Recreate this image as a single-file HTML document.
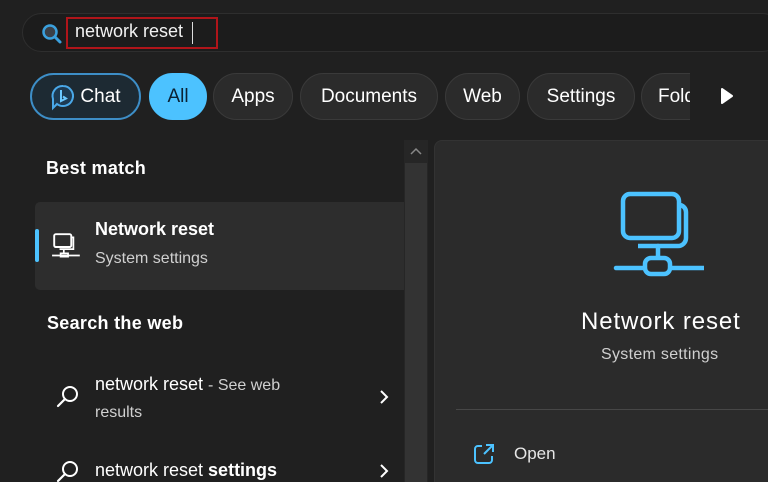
<!DOCTYPE html>
<html><head><meta charset="utf-8"><style>
*{margin:0;padding:0;box-sizing:border-box}
html,body{width:768px;height:482px;overflow:hidden}
body{background:#202020;position:relative;font-family:"Segoe UI","Liberation Sans","DejaVu Sans",sans-serif;color:#fff}
.abs{position:absolute}
.search{left:22px;top:13px;width:760px;height:39px;border-radius:20px;background:#1c1c1c;border:1px solid #2e2e2e}
.red{left:66px;top:17px;width:152px;height:32px;border:2px solid #b0151a}
.chip{position:absolute;top:73px;height:47px;border-radius:24px;background:#2b2b2b;border:1px solid #3a3a3a;font-size:19px;color:#fff;display:flex;align-items:center;justify-content:center}
.t{position:absolute;white-space:nowrap}
</style></head><body>
<div class="abs search"></div>
<svg class="abs" style="left:40px;top:22px" width="24" height="24" viewBox="0 0 24 24"><circle cx="10" cy="10" r="6.5" fill="#3a4048" stroke="#3ba0dd" stroke-width="2.5"/><path d="M15 15l5 5" stroke="#3ba0dd" stroke-width="3" stroke-linecap="round"/></svg>
<div class="abs red"></div>
<div class="t" style="left:75px;top:21px;font-size:18px;color:#f2f2f2">network reset</div>
<div class="abs" style="left:192px;top:22px;width:1px;height:22px;background:#ddd"></div>

<div class="chip" style="left:30px;width:111px;background:#1d2a33;border:2px solid #3d8ec7"><svg width="26" height="28" viewBox="0 0 26 28" style="margin-right:4px"><path d="M13 3a10 10 0 1 1 -6 18l-4 4v-9a10 10 0 0 1 10 -13z" fill="#1d3a52" stroke="#4aa8e8" stroke-width="2"/><path d="M11 7v11l5-2.5-3-2" fill="none" stroke="#6cc8ff" stroke-width="2"/></svg>Chat</div>
<div class="chip" style="left:149px;width:58px;background:#4cc2ff;border-color:#4cc2ff;color:#0b2233">All</div>
<div class="chip" style="left:213px;width:80px">Apps</div>
<div class="chip" style="left:300px;width:138px">Documents</div>
<div class="chip" style="left:445px;width:75px">Web</div>
<div class="chip" style="left:527px;width:108px">Settings</div>
<div style="position:absolute;left:641px;top:73px;width:49px;height:47px;overflow:hidden"><div class="chip" style="left:0;top:0;width:90px;justify-content:flex-start;padding-left:16px">Folders</div></div>
<svg class="abs" style="left:720px;top:87px" width="14" height="18"><path d="M2 2l10 7-10 7z" fill="#fff" stroke="#fff" stroke-width="2" stroke-linejoin="round"/></svg>

<div class="t" style="left:46px;top:158px;font-size:18px;font-weight:bold;letter-spacing:0.3px">Best match</div>
<div class="abs" style="left:35px;top:202px;width:369px;height:88px;background:#2d2d2d;border-radius:5px 0 0 5px"></div>
<div class="abs" style="left:35px;top:229px;width:4px;height:33px;background:#4cc2ff;border-radius:2px"></div>
<svg class="abs" style="left:51px;top:232px" width="32" height="30" viewBox="0 0 30 28"><rect x="3" y="2" width="16" height="12" rx="1.5" fill="none" stroke="#fff" stroke-width="1.8"/><path d="M19 5h2v11h-13" fill="none" stroke="#fff" stroke-width="1.6"/><path d="M12 16v4M1 22h26M9 20h7v3H9z" fill="none" stroke="#fff" stroke-width="1.6"/></svg>
<div class="t" style="left:95px;top:219px;font-size:18px;font-weight:bold">Network reset</div>
<div class="t" style="left:95px;top:250px;font-size:16px;color:#d0d0d0">System settings</div>

<div class="t" style="left:47px;top:313px;font-size:18px;font-weight:bold;letter-spacing:0.3px">Search the web</div>
<svg class="abs" style="left:55px;top:384px" width="26" height="26" viewBox="0 0 26 26"><circle cx="15" cy="10" r="7" fill="none" stroke="#fff" stroke-width="2"/><path d="M10 15l-7 7" stroke="#fff" stroke-width="2.2" stroke-linecap="round"/></svg>
<div class="t" style="left:95px;top:374px;font-size:18px">network reset <span style="font-size:16px;color:#d0d0d0">- See web</span></div>
<div class="t" style="left:95px;top:404px;font-size:16px;color:#d0d0d0">results</div>
<svg class="abs" style="left:378px;top:389px" width="12" height="16"><path d="M3 2l6 6-6 6" fill="none" stroke="#fff" stroke-width="2"/></svg>
<svg class="abs" style="left:55px;top:459px" width="26" height="26" viewBox="0 0 26 26"><circle cx="15" cy="10" r="7" fill="none" stroke="#fff" stroke-width="2"/><path d="M10 15l-7 7" stroke="#fff" stroke-width="2.2" stroke-linecap="round"/></svg>
<div class="t" style="left:95px;top:460px;font-size:18px">network reset <b>settings</b></div>
<svg class="abs" style="left:378px;top:463px" width="12" height="16"><path d="M3 2l6 6-6 6" fill="none" stroke="#fff" stroke-width="2"/></svg>

<div class="abs" style="left:404px;top:140px;width:24px;height:342px;background:#262626"></div>
<div class="abs" style="left:405px;top:163px;width:22px;height:319px;background:#333"></div>
<svg class="abs" style="left:408px;top:145px" width="16" height="12"><path d="M3 9l5-5 5 5" fill="none" stroke="#888" stroke-width="1.5"/></svg>

<div class="abs" style="left:434px;top:140px;width:340px;height:350px;background:#2b2b2b;border-radius:8px 0 0 0;border:1px solid #333"></div>
<svg class="abs" style="left:612px;top:190px" width="92" height="92" viewBox="0 0 92 92"><rect x="11" y="4" width="56" height="44" rx="7" fill="none" stroke="#4cc2ff" stroke-width="4.5"/><path d="M67 15a7 7 0 0 1 7 7v26a8 8 0 0 1-8 8H26" fill="none" stroke="#4cc2ff" stroke-width="4.5"/><path d="M46 56v10M4 78h88" stroke="#4cc2ff" stroke-width="4.5" stroke-linecap="round"/><rect x="33" y="68" width="25" height="16" rx="6" fill="#2b2b2b" stroke="#4cc2ff" stroke-width="4.5"/></svg>
<div class="t" style="left:581px;top:308px;font-size:24px;letter-spacing:0.9px">Network reset</div>
<div class="t" style="left:601px;top:346px;font-size:16px;color:#d0d0d0;letter-spacing:0.3px">System settings</div>
<div class="abs" style="left:456px;top:409px;width:312px;height:1px;background:#474747"></div>
<svg class="abs" style="left:473px;top:443px" width="22" height="22" viewBox="0 0 22 22"><path d="M9 3H5a3 3 0 0 0-3 3v11a3 3 0 0 0 3 3h11a3 3 0 0 0 3-3v-4" fill="none" stroke="#4cc2ff" stroke-width="2"/><path d="M13 2h7v7M20 2l-9 9" fill="none" stroke="#4cc2ff" stroke-width="2"/></svg>
<div class="t" style="left:514px;top:444px;font-size:17px;color:#e6e6e6">Open</div>
</body></html>
